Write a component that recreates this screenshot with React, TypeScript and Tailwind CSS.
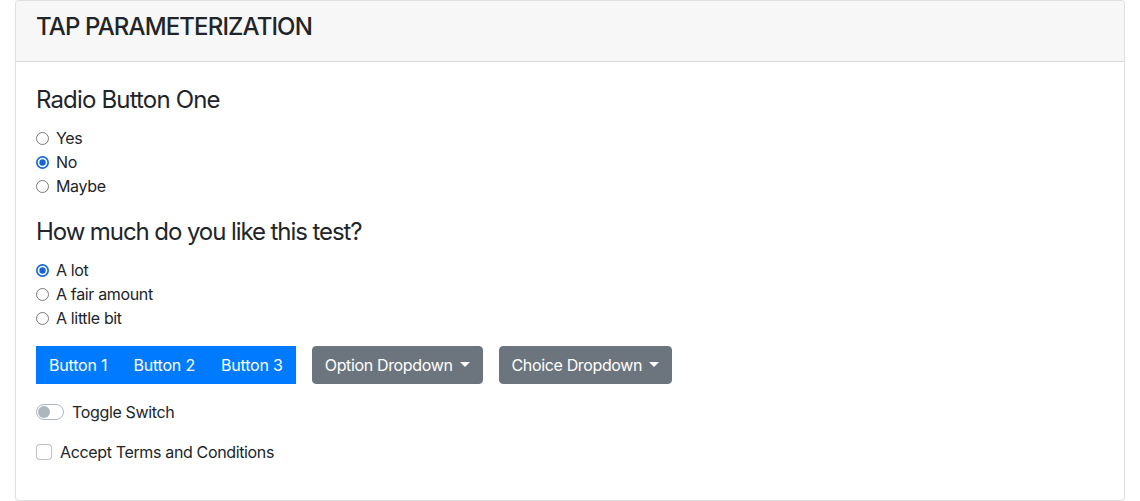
import React from "react";

const font = { fontFamily: 'Inter, "Noto Sans", "Liberation Sans", sans-serif' };

function Radio({ checked }: { checked?: boolean }) {
  return (
    <svg width="13" height="13" viewBox="0 0 13 13" className="mt-[6px] mr-[7px] shrink-0">
      {checked ? (
        <>
          <circle cx="6.5" cy="6.5" r="6.5" fill="#1466d8" />
          <circle cx="6.5" cy="6.5" r="4.8" fill="#ffffff" />
          <circle cx="6.5" cy="6.5" r="3.2" fill="#1466d8" />
        </>
      ) : (
        <circle cx="6.5" cy="6.5" r="6" fill="#ffffff" stroke="#7a7a7a" strokeWidth="1" />
      )}
    </svg>
  );
}

function RadioGroup({
  title,
  items,
  selected,
  tight,
}: {
  title: string;
  items: string[];
  selected: number;
  tight?: boolean;
}) {
  return (
    <div className="mb-4">
      <div
        className={
          tight
            ? "text-[24px] leading-[36px] mb-2 tracking-[-0.045em]"
            : "text-[24px] leading-[36px] mb-2 tracking-[-0.035em]"
        }
      >
        {title}
      </div>
      {items.map((it, i) => (
        <div key={it} className="flex items-start text-base leading-6">
          <Radio checked={i === selected} />
          <span>{it}</span>
        </div>
      ))}
    </div>
  );
}

function Caret() {
  return (
    <span className="inline-block ml-[7px] w-0 h-0 border-t-[5px] border-t-white border-x-[5px] border-x-transparent align-middle relative top-[-1px]" />
  );
}

export default function App() {
  return (
    <div className="bg-white px-[15px] text-[#212529] tracking-[-0.022em]" style={font}>
      <div className="border border-[rgba(0,0,0,0.125)] rounded-[4px] bg-white">
        <div className="bg-[#f7f7f7] px-5 py-3 border-b border-[rgba(0,0,0,0.125)] rounded-t-[3px]">
          <h4 className="text-[24px] font-medium leading-[28px] mb-2 tracking-[-0.036em]">TAP PARAMETERIZATION</h4>
        </div>
        <div className="p-5">
          <RadioGroup title="Radio Button One" items={["Yes", "No", "Maybe"]} selected={1} />
          <RadioGroup
            title="How much do you like this test?"
            items={["A lot", "A fair amount", "A little bit"]}
            selected={0}
            tight
          />
          <div className="flex gap-4 mb-4">
            <div className="flex rounded-[4px] bg-[#007bff]">
              {["Button 1", "Button 2", "Button 3"].map((b) => (
                <button
                  key={b}
                  className="px-3 py-[6px] leading-6 text-base text-white border border-[#007bff] tracking-[-0.012em]"
                >
                  {b}
                </button>
              ))}
            </div>
            <button className="flex items-center px-3 py-[6px] leading-6 text-base text-white bg-[#6c757d] border border-[#6c757d] rounded-[4px] tracking-[-0.022em]">
              Option Dropdown
              <Caret />
            </button>
            <button className="flex items-center px-3 py-[6px] leading-6 text-base text-white bg-[#6c757d] border border-[#6c757d] rounded-[4px] tracking-[-0.022em]">
              Choice Dropdown
              <Caret />
            </button>
          </div>
          <div className="flex items-start mb-4 text-base leading-6">
            <div className="relative mt-1 mr-2 w-7 h-4 rounded-full border border-[#adb5bd] bg-white shrink-0">
              <div className="absolute top-[1px] left-[1px] w-3 h-3 rounded-full bg-[#adb5bd]" />
            </div>
            <span>Toggle Switch</span>
          </div>
          <div className="flex items-start mb-4 text-base leading-6">
            <div className="mt-1 mr-2 w-4 h-4 rounded-[4px] border border-[rgba(0,0,0,0.25)] bg-white shrink-0" />
            <span>Accept Terms and Conditions</span>
          </div>
        </div>
      </div>
    </div>
  );
}
